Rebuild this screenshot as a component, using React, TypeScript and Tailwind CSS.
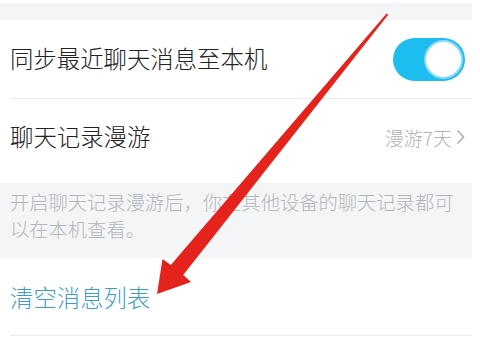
const font = "font-['Noto_Sans_CJK_SC','Noto_Sans',sans-serif]";

const Toggle = () => (
  <div className="flex h-[43px] w-[72px] items-center justify-end rounded-full bg-[#1ebdf0] pr-[2px]">
    <div className="h-[39px] w-[39px] rounded-full border-2 border-[#8fd9f3] bg-white" />
  </div>
);

const Arrow = () => (
  <svg className="pointer-events-none absolute left-0 top-0" width="480" height="340" viewBox="0 0 480 340">
    <polygon
      points="388.4,14.6 183.2,275.1 191,282 157,294 162.5,259 170.8,264.9 386.6,13.4"
      fill="#e4241c"
    />
  </svg>
);

const App = () => {
  return (
    <div className={`relative h-[340px] w-[480px] overflow-hidden bg-white font-light ${font}`}>
      <div className="w-[472px]">
        <div className="mt-[3px] h-[17px] bg-[#f3f5f7]" />
        <div className="flex h-[78px] items-center justify-between pl-[10px] pr-[7px]">
          <span className="text-[23.4px] leading-none text-[#222]">同步最近聊天消息至本机</span>
          <Toggle />
        </div>
        <div className="ml-[10px] border-t border-[#e9ebed]" />
        <div className="flex h-[84px] items-center justify-between pb-[8px] pl-[10px] pr-[7px]">
          <span className="text-[23.4px] leading-none text-[#222]">聊天记录漫游</span>
          <span className="flex items-center gap-[4px] text-[19px] leading-none text-[#afb3b6]">
            漫游7天
            <svg width="9" height="16" viewBox="0 0 9 16">
              <path d="M1.5 1.5l6 6.5-6 6.5" fill="none" stroke="#afb3b6" strokeWidth="1.8" />
            </svg>
          </span>
        </div>
        <div className="h-[75px] bg-[#f3f5f7] px-[10px] pt-[6px]">
          <p className="text-[19.3px] leading-[27px] text-[#b2b7ba]">
            开启聊天记录漫游后，你在其他设备的聊天记录都可以在本机查看。
          </p>
        </div>
        <div className="flex h-[77px] items-center pl-[10px]">
          <span className="pt-[2px] text-[23.4px] leading-none text-[#3e9dc6]">清空消息列表</span>
        </div>
        <div className="ml-[10px] border-t border-[#e9ebed]" />
      </div>
      <Arrow />
    </div>
  );
};

export default App;
